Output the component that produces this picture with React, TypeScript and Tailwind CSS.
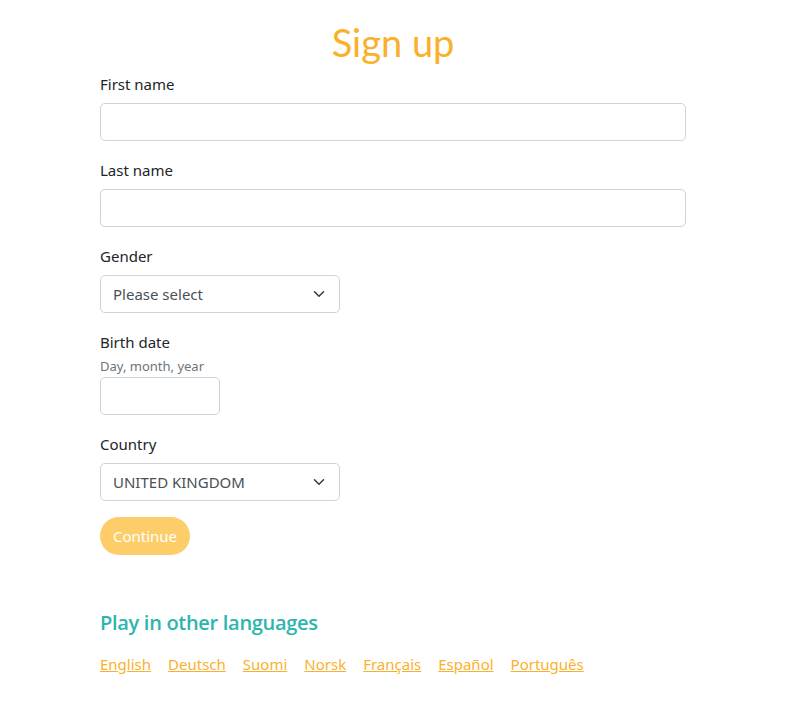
import React from "react";

const languages = ["English", "Deutsch", "Suomi", "Norsk", "Français", "Español", "Português"];

const Chevron = () => (
    <svg width="12" height="12" viewBox="0 0 16 16" fill="none" stroke="#343a40" strokeWidth="2" strokeLinecap="round" strokeLinejoin="round">
        <path d="M2 5l6 6 6-6" />
    </svg>
);

const Field = ({ label, children }: { label: string; children: React.ReactNode }) => (
    <div className="flex flex-col mb-[18px]">
        <label className="text-[15px] leading-[22px] text-[#212529] mb-2">{label}</label>
        {children}
    </div>
);

const SelectBox = ({ value }: { value: string }) => (
    <div className="w-[240px] h-[38px] border border-[#ced4da] rounded-[5px] flex items-center justify-between pl-3 pr-[14px] text-[15px] text-[#495057]">
        <span>{value}</span>
        <Chevron />
    </div>
);

export default function App() {
    return (
        <div className="w-[786px] min-h-[726px] bg-white font-['Noto_Sans','Open_Sans',sans-serif]">
            <div className="w-[586px] ml-[100px] pt-5">
                <h1 className="text-center text-[38px] leading-[44px] text-[#fbb02c] font-['Lato',sans-serif] mb-[9px]">
                    Sign up
                </h1>

                <Field label="First name">
                    <div className="w-full h-[38px] border border-[#ced4da] rounded-[5px]" />
                </Field>
                <Field label="Last name">
                    <div className="w-full h-[38px] border border-[#ced4da] rounded-[5px]" />
                </Field>
                <Field label="Gender">
                    <SelectBox value="Please select" />
                </Field>

                <div className="flex flex-col mb-[18px]">
                    <label className="text-[15px] leading-[22px] text-[#212529] mb-1">Birth date</label>
                    <span className="text-[13px] leading-[18px] text-[#6c757d] mb-[2px]">Day, month, year</span>
                    <div className="w-[120px] h-[38px] border border-[#ced4da] rounded-[5px]" />
                </div>

                <Field label="Country">
                    <SelectBox value="UNITED KINGDOM" />
                </Field>

                <button className="w-[90px] h-[38px] rounded-full bg-[#fdcd69] text-white text-[15px] -mt-[2px]">
                    Continue
                </button>

                <h2 className="mt-[54px] text-[20px] leading-[28px] font-semibold text-[#2bb5ad] font-['Open_Sans',sans-serif] tracking-[-0.3px]">
                    Play in other languages
                </h2>
                <div className="mt-4 flex gap-[17px] text-[15px] leading-[22px]">
                    {languages.map((l) => (
                        <a key={l} href="#" className="text-[#fbb02c] underline">
                            {l}
                        </a>
                    ))}
                </div>
            </div>
        </div>
    );
}
